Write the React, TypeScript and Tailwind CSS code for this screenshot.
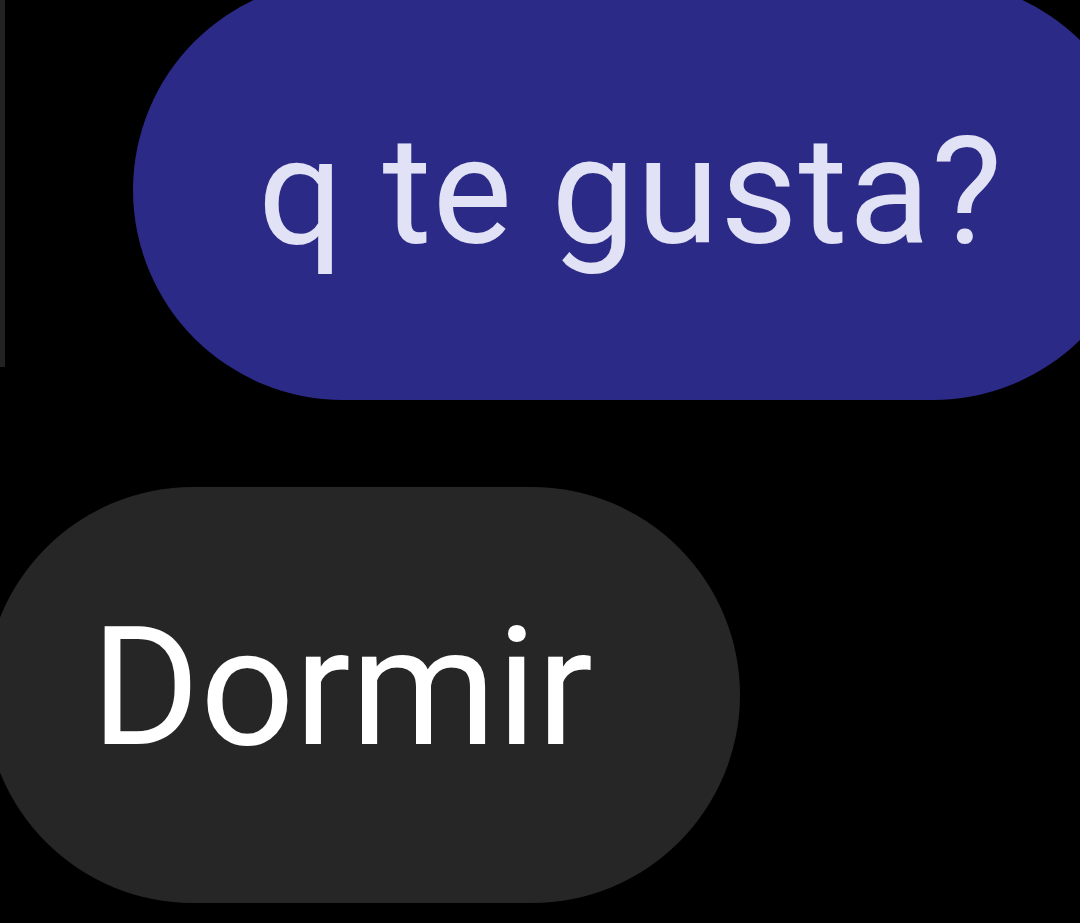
export default function App() {
  return (
    <div
      className="w-[1080px] h-[923px] bg-black overflow-hidden flex flex-col"
      style={{ fontFamily: "Roboto, 'Noto Sans', Arial, sans-serif" }}
    >
      <div className="flex flex-row items-start -mt-[20px]">
        <div className="w-[5px] h-[367px] mt-[20px] bg-[#222222] shrink-0" />
        <div className="ml-[128px] w-[1010px] h-[420px] shrink-0 rounded-[210px] bg-[#2b2a87] pt-[137px] pl-[125px]">
          <span className="block text-[150px] leading-none tracking-[1px] text-[#e2e2f6] whitespace-nowrap">
            q te gusta?
          </span>
        </div>
      </div>
      <div className="mt-[87px] -ml-[15px] w-[755px] h-[416px] shrink-0 rounded-full bg-[#262626] pt-[118px] pl-[106px]">
        <span className="block text-[166px] leading-none text-white whitespace-nowrap">
          Dormir
        </span>
      </div>
    </div>
  );
}
